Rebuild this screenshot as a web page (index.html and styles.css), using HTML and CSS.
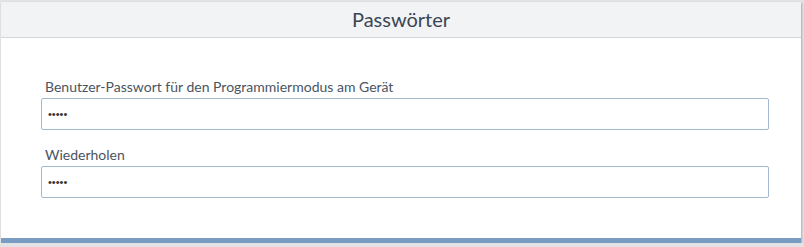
FILE: index.html
```html
<!DOCTYPE html>
<html lang="de">
<head>
    <meta charset="UTF-8">
    <title>Passwörter</title>
    <link rel="stylesheet" href="styles.css">
</head>
<body>

    <!-- Password panel -->
    <section class="panel">
        <header class="panel-head">Passwörter</header>
        <div class="panel-body">
            <label class="field">
                <span class="field-label">Benutzer-Passwort für den Programmiermodus am Gerät</span>
                <input type="password" value="12345">
            </label>
            <label class="field">
                <span class="field-label">Wiederholen</span>
                <input type="password" value="12345">
            </label>
        </div>
        <div class="panel-foot"></div>
    </section>

</body>
</html>
```
FILE: styles.css
```css
body {
    margin: 0;
    background: #e3e3e3;
    font-family: Lato, "Open Sans", sans-serif;
}
.panel {
    margin: 2px 3px 0 1px;
    background: white;
    box-shadow: 1px 1px 2px rgba(0, 0, 0, 0.25);
}
.panel-head {
    height: 35px;
    line-height: 35px;
    text-align: center;
    font-size: 20px;
    color: #3b4654;
    background: #f2f3f5;
    border-bottom: 1px solid #d4d6d9;
}
.panel-body {
    padding: 40px 32px 40px 40px;
    display: flex;
    flex-direction: column;
    gap: 16px;
}
.field {
    display: flex;
    flex-direction: column;
    gap: 3px;
}
.field-label {
    padding-left: 4px;
    font-size: 14px;
    line-height: 17px;
    color: #4a5462;
}
.field input {
    height: 32px;
    box-sizing: border-box;
    margin: 0;
    border: 1px solid #a4b8d0;
    border-radius: 2px;
    padding: 0 6px;
    font-size: 11px;
    color: #333;
    outline: none;
}
.panel-foot {
    height: 5px;
    background: #7b9cc2;
}
```
